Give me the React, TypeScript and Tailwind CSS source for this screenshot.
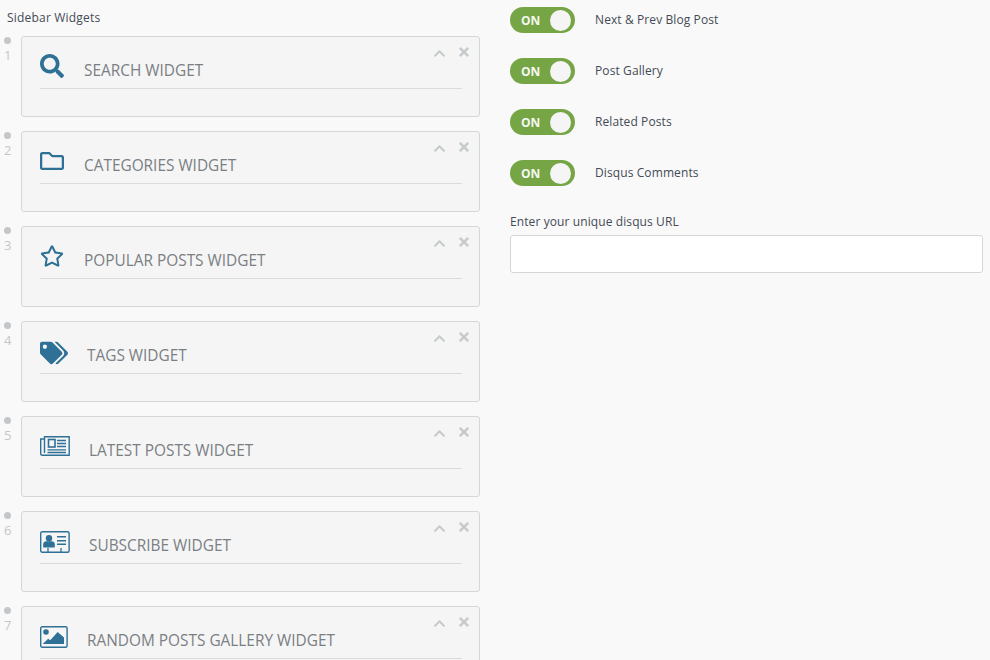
import React from "react";
import { FaSearch, FaRegFolder, FaRegStar, FaTags, FaChevronUp, FaTimes } from "react-icons/fa";

const NewspaperIcon = () => (
  <svg viewBox="0 0 30 20" className="w-[30px] h-[20px] mt-[2px]" fill="none" stroke="currentColor">
    <path d="M4.5 2.5V.8h24.7v18.4H2A1.5 1.5 0 0 1 .7 17.7V3h3.8v14" strokeWidth="1.4" />
    <rect x="8.5" y="3.5" width="6.5" height="7.5" strokeWidth="1.6" />
    <path d="M17 4.5h9M17 7.5h9M17 10.5h9M7.5 13.8h18.5M7.5 16.5h18.5" strokeWidth="1.3" />
  </svg>
);

const ContactCardIcon = () => (
  <svg viewBox="0 0 30 22" className="w-[30px] h-[22px] mt-[2px]" fill="none" stroke="currentColor">
    <rect x=".7" y=".7" width="28.4" height="20.6" rx="1.5" strokeWidth="1.4" />
    <circle cx="9" cy="7.2" r="3.2" fill="currentColor" stroke="none" />
    <path d="M3.2 16.5v-3.2c0-1.8 1.4-3 3-3h5.6c1.6 0 3 1.2 3 3v3.2z" fill="currentColor" stroke="none" />
    <path d="M17 5.7h9M17 9.7h9M17 13.3h9" strokeWidth="1.4" />
    <path d="M8 17v4M21 17v4" strokeWidth="1.3" />
  </svg>
);

const PictureIcon = () => (
  <svg viewBox="0 0 28 22" className="w-[28px] h-[22px] mt-[2px]" fill="none" stroke="currentColor">
    <rect x=".7" y=".7" width="26.4" height="20.6" rx="1.5" strokeWidth="1.4" />
    <circle cx="6" cy="6" r="2.8" fill="currentColor" stroke="none" />
    <path d="M2.7 18l5.5-5.2 2 1.4 7.5-8.2 6.3 5.5V18z" fill="currentColor" stroke="none" />
  </svg>
);

const widgets = [
  { title: "SEARCH WIDGET", icon: <FaSearch className="w-6 h-6" />, slot: "w-[44px]" },
  { title: "CATEGORIES WIDGET", icon: <FaRegFolder className="w-6 h-6" />, slot: "w-[44px]" },
  { title: "POPULAR POSTS WIDGET", icon: <FaRegStar className="w-6 h-6" />, slot: "w-[44px]" },
  { title: "TAGS WIDGET", icon: <FaTags className="w-7 h-7" />, slot: "w-[47px]" },
  { title: "LATEST POSTS WIDGET", icon: <NewspaperIcon />, slot: "w-[49px]" },
  { title: "SUBSCRIBE WIDGET", icon: <ContactCardIcon />, slot: "w-[49px]" },
  { title: "RANDOM POSTS GALLERY WIDGET", icon: <PictureIcon />, slot: "w-[47px]" },
];

const toggles = ["Next & Prev Blog Post", "Post Gallery", "Related Posts", "Disqus Comments"];

const WidgetCard = ({ index, title, icon, slot }: { index: number; title: string; icon: React.ReactNode; slot: string }) => (
  <div className="flex -ml-[3px]">
    <div className="w-[17px] shrink-0 flex flex-col items-start">
      <span className="mt-[1px] w-[7px] h-[7px] rounded-full bg-[#c4c7c9]" />
      <span className="mt-[3px] text-[13px] leading-[17px] text-[#c3c7ca]">{index}</span>
    </div>
    <div className="relative w-[459px] h-[81px] bg-[#f5f5f5] border border-[#d3d7d8] rounded-[3px] pl-[18px] pr-[17px]">
      <div className="flex items-start h-[52px] border-b border-[#d8dbdc]">
        <div className={`${slot} shrink-0 pt-[17px] text-[#2f7096]`}>{icon}</div>
        <span className="mt-[24px] text-[15.4px] leading-[20px] text-[#7a7f84]">{title}</span>
      </div>
      <div className="absolute right-[8px] top-[8px] flex items-start gap-[11px] text-[#c6cacc]">
        <FaChevronUp className="w-[13px] h-[13px] mt-[2px]" />
        <FaTimes className="w-[14px] h-[14px]" />
      </div>
    </div>
  </div>
);

const Toggle = ({ label }: { label: string }) => (
  <div className="flex items-center h-[26px] mb-[25px]">
    <div className="w-[65px] h-[26px] rounded-full bg-[#75a544] flex items-center justify-between pl-[11px] pr-[4px]">
      <span className="mt-[2px] text-[12px] font-bold text-[#f5f8f2]">ON</span>
      <span className="w-[21px] h-[21px] rounded-full bg-[#f5f5f5]" />
    </div>
    <span className="ml-[20px] text-[12px] leading-[24px] tracking-[0.1px] text-[#444b55]">{label}</span>
  </div>
);

export default function App() {
  return (
    <div className="flex h-[660px] w-[990px] overflow-hidden bg-[#f9f9f9] font-['Open_Sans',sans-serif]">
      <div className="w-[510px] shrink-0 pl-[7px] pt-[9px]">
        <h2 className="text-[12px] leading-[17px] tracking-[0.2px] font-normal text-[#444b55] mb-[10px]">Sidebar Widgets</h2>
        <div className="flex flex-col gap-[14px]">
          {widgets.map((w, i) => (
            <WidgetCard key={w.title} index={i + 1} title={w.title} icon={w.icon} slot={w.slot} />
          ))}
        </div>
      </div>
      <div className="flex-1 pt-[7px] pr-[7px]">
        {toggles.map((t) => (
          <Toggle key={t} label={t} />
        ))}
        <label className="block mt-[27px] text-[12px] leading-[17px] tracking-[0.1px] text-[#444b55]">Enter your unique disqus URL</label>
        <input type="text" className="mt-[5px] block w-full h-[38px] bg-white border border-[#d3d7d8] rounded-[3px]" />
      </div>
    </div>
  );
}
